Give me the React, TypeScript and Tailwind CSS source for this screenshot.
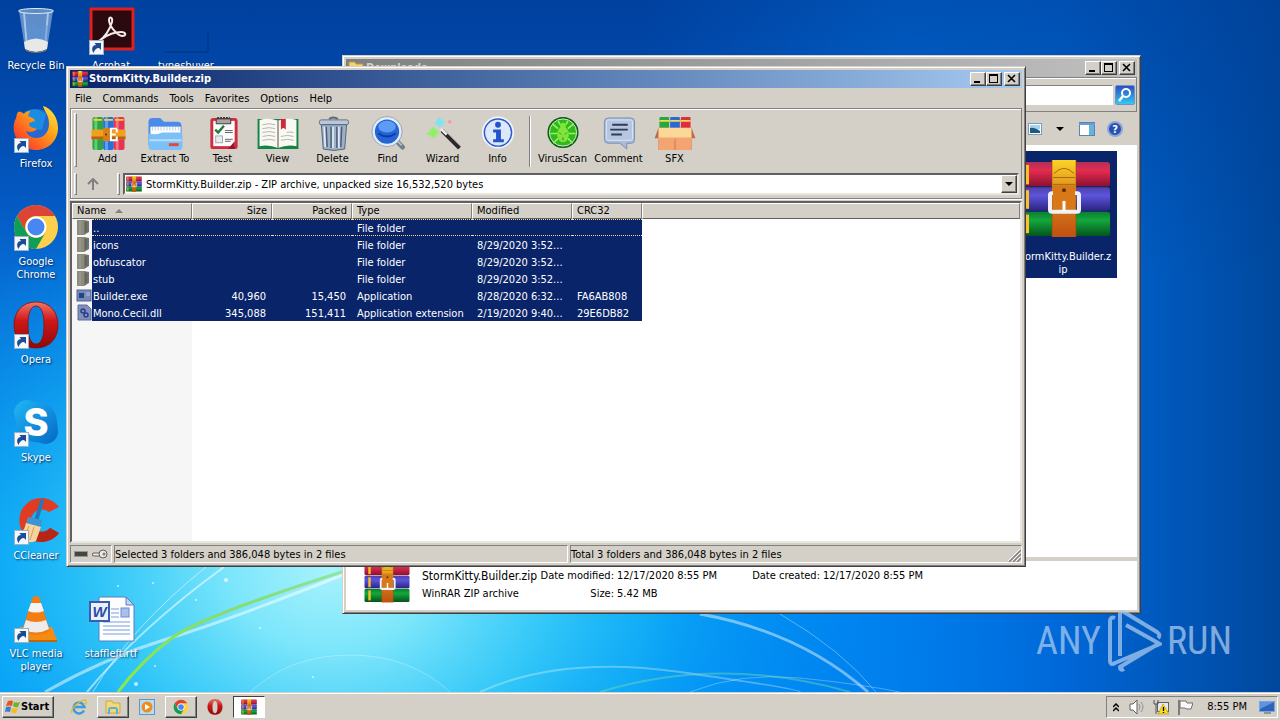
import type { ReactNode } from "react";

const raised =
  "border border-t-white border-l-white border-r-[#404040] border-b-[#404040] bg-[#d4d0c8] shadow-[inset_-1px_-1px_0_#808080]";
const sunken =
  "border border-t-[#808080] border-l-[#808080] border-r-white border-b-white";
const frame =
  "border border-t-[#d4d0c8] border-l-[#d4d0c8] border-r-[#404040] border-b-[#404040] bg-[#d4d0c8] shadow-[inset_1px_1px_0_#fff,inset_-1px_-1px_0_#808080]";

/* ---------- wallpaper ---------- */

function Wallpaper() {
  return (
    <svg
      className="absolute inset-0 h-full w-full"
      viewBox="0 0 1280 692"
      preserveAspectRatio="none"
      aria-hidden="true"
    >
      <defs>
        <linearGradient id="sky" x1="0" y1="0" x2="0" y2="1">
          <stop offset="0" stopColor="#0043a8" />
          <stop offset="0.3" stopColor="#0560cc" />
          <stop offset="0.6" stopColor="#0785e6" />
          <stop offset="0.8" stopColor="#009ff5" />
          <stop offset="1" stopColor="#0098f8" />
        </linearGradient>
        <radialGradient id="glow" gradientUnits="userSpaceOnUse" cx="0" cy="0" r="1" gradientTransform="translate(330 570) scale(500 400)">
          <stop offset="0" stopColor="#a8f2fc" />
          <stop offset="0.2" stopColor="#7ce6fb" />
          <stop offset="0.45" stopColor="#38ccf8" stopOpacity="0.9" />
          <stop offset="0.7" stopColor="#14b0f6" stopOpacity="0.55" />
          <stop offset="1" stopColor="#0a98f0" stopOpacity="0" />
        </radialGradient>
        <linearGradient id="shade" x1="0" y1="0" x2="1" y2="0">
          <stop offset="0.5" stopColor="#0078f0" stopOpacity="0" />
          <stop offset="0.7" stopColor="#0078ea" stopOpacity="0.8" />
          <stop offset="0.83" stopColor="#0068d8" />
          <stop offset="1" stopColor="#00479c" />
        </linearGradient>
        <linearGradient id="top" x1="0" y1="0" x2="0" y2="1">
          <stop offset="0" stopColor="#003f98" stopOpacity="0.6" />
          <stop offset="0.4" stopColor="#003f98" stopOpacity="0" />
        </linearGradient>
        <linearGradient id="green" x1="0" y1="0" x2="1" y2="0">
          <stop offset="0" stopColor="#8ae84a" />
          <stop offset="0.5" stopColor="#86dd6c" />
          <stop offset="1" stopColor="#86dd6c" stopOpacity="0.6" />
        </linearGradient>
      </defs>
      <rect width="1280" height="692" fill="url(#sky)" />
      <rect width="1280" height="692" fill="url(#glow)" />
      <rect width="1280" height="692" fill="url(#shade)" />
      <rect width="1280" height="692" fill="url(#top)" />
      <g fill="none" stroke="#fff">
        <path d="M45 692Q105 658 167 639T345 574" strokeWidth="3" opacity=".5" />
        <path d="M87 692Q140 628 224 567" strokeWidth="2" opacity=".55" />
        <path d="M93 692Q130 628 206 567" strokeWidth="1" opacity=".5" />
        <path d="M250 692Q290 655 350 655T450 692" strokeWidth="1" opacity=".3" fill="#fff" fillOpacity=".12" />
        <path d="M480 692Q560 655 680 672T800 692" strokeWidth="2" opacity=".3" />
        <path d="M690 692Q740 672 800 678T900 692" strokeWidth="1" opacity=".3" />
        <path d="M700 614Q800 632 868 692" strokeWidth="3" opacity=".45" />
        <path d="M780 614Q842 650 876 692" strokeWidth="1" opacity=".35" />
      </g>
      <path d="M118 692Q142 660 172 638T345 571" fill="none" stroke="url(#green)" strokeWidth="3" />
      <path d="M600 692Q720 655 850 692" fill="none" stroke="#7fe0a8" strokeWidth="2" opacity=".4" />
      <g fill="#fff" opacity=".7">
        <circle cx="118" cy="586" r="1" />
        <circle cx="153" cy="583" r="1" />
        <circle cx="226" cy="580" r="2" />
        <circle cx="196" cy="600" r="1" />
        <circle cx="136" cy="684" r="2" />
        <circle cx="155" cy="666" r="1" />
        <circle cx="260" cy="628" r="1" />
        <circle cx="313" cy="677" r="1" />
      </g>
    </svg>
  );
}

/* ---------- shared icons ---------- */

// three stacked books held by a belt
function Books({ className }: { className: string }) {
  return (
    <svg viewBox="0 0 96 80" preserveAspectRatio="none" className={className} aria-hidden="true">
      <defs>
        <linearGradient id="bkR" x1="0" y1="0" x2="0" y2="1">
          <stop offset="0" stopColor="#b03058" />
          <stop offset=".35" stopColor="#e42c50" />
          <stop offset="1" stopColor="#8c1030" />
        </linearGradient>
        <linearGradient id="bkB" x1="0" y1="0" x2="0" y2="1">
          <stop offset="0" stopColor="#5040a8" />
          <stop offset=".35" stopColor="#5c54dc" />
          <stop offset="1" stopColor="#2c2480" />
        </linearGradient>
        <linearGradient id="bkG" x1="0" y1="0" x2="0" y2="1">
          <stop offset="0" stopColor="#0c7c34" />
          <stop offset=".35" stopColor="#14a83c" />
          <stop offset="1" stopColor="#04541c" />
        </linearGradient>
        <linearGradient id="belt" x1="0" y1="0" x2="0" y2="1">
          <stop offset="0" stopColor="#fcd428" />
          <stop offset=".35" stopColor="#e09420" />
          <stop offset="1" stopColor="#c05010" />
        </linearGradient>
      </defs>
      <rect x="1" y="2" width="94" height="25" rx="3" fill="url(#bkR)" />
      <rect x="1" y="28" width="94" height="24" rx="3" fill="url(#bkB)" />
      <rect x="1" y="53" width="94" height="25" rx="3" fill="url(#bkG)" />
      <g fill="#fcc028">
        <rect x="9" y="5" width="5" height="20" />
        <rect x="9" y="31" width="5" height="19" />
        <rect x="9" y="56" width="5" height="19" />
      </g>
      <rect x="37" y="0" width="24" height="79" fill="url(#belt)" />
      <path d="M37 0v79M61 0v79" stroke="#8c5008" strokeWidth="1" opacity=".6" />
      <path d="M39 14q10-11 20 0M38 18h22M38 25h22" fill="none" stroke="#a86808" strokeWidth="1" />
      <rect x="35" y="34" width="29" height="19" rx="2" fill="none" stroke="#f0f0f8" strokeWidth="4" />
      <rect x="38" y="26" width="22" height="24" fill="#d87818" />
      <circle cx="49" cy="31" r="2" fill="#603008" />
      <path d="M49 42v11" stroke="#fff" strokeWidth="3" />
    </svg>
  );
}

function ShortcutBadge() {
  return (
    <svg viewBox="0 0 15 15" className="absolute bottom-0 left-[2px] h-[15px] w-[15px]" aria-hidden="true">
      <rect x=".5" y=".5" width="14" height="14" fill="#f4f8fc" stroke="#9cb0c4" />
      <path d="M4.500 13C1.500 8 4 5 7 5L5.500 3H12v7l-2-2C7 8 5.500 10 4.500 13z" fill="#1c4c94" />
    </svg>
  );
}

function ChromeLogo({ className }: { className: string }) {
  return (
    <svg viewBox="0 0 48 48" className={className} aria-hidden="true">
      <circle cx="24" cy="24" r="22" fill="#fcd04c" />
      <path d="M4.950 13A22 22 0 0 1 43.050 13H24A11 11 0 0 0 14.500 29.500z" fill="#dc4437" />
      <path d="M4.950 13A22 22 0 0 0 24 46L33.500 29.500A11 11 0 0 1 14.500 29.500z" fill="#109d58" />
      <circle cx="24" cy="24" r="10.500" fill="#fff" />
      <circle cx="24" cy="24" r="8.500" fill="#4886f4" />
    </svg>
  );
}

function OperaLogo({ className }: { className: string }) {
  return (
    <svg viewBox="0 0 48 48" className={className} aria-hidden="true">
      <defs>
        <linearGradient id="op" x1="0" y1="0" x2="0" y2="1">
          <stop offset="0" stopColor="#f07868" />
          <stop offset=".4" stopColor="#d01818" />
          <stop offset="1" stopColor="#900808" />
        </linearGradient>
      </defs>
      <path
        d="M24 1C10 1 2 11 2 24s8 23 22 23 22-10 22-23S38 1 24 1zm0 4c6 0 8 9 8 19s-2 19-8 19-8-9-8-19 2-19 8-19z"
        fill="url(#op)"
        fillRule="evenodd"
        stroke="#8c0c0c"
        strokeWidth=".8"
      />
    </svg>
  );
}

/* ---------- desktop icons ---------- */

const big = "h-12 w-12";

function RecycleBin() {
  return (
    <svg viewBox="0 0 48 48" className={big} aria-hidden="true">
      <path d="M7 4l6 38q11 5 22 0l6-38z" fill="#9cc0e4" fillOpacity=".6" />
      <path d="M12 6l3 34M36 6l-3 34" stroke="#dcecfc" strokeWidth="2" opacity=".6" />
      <path d="M14 20l7-6 8 8 8-5-3 18H16z" fill="#5c94d4" opacity=".5" />
      <path d="M12 35q12-7 24 0l-1 7q-11 6-22 0z" fill="#e8e8e8" />
      <path d="M13 42q11 6 22 0l-1 2q-10 4-20 0z" fill="#7c7468" />
      <ellipse cx="24" cy="4" rx="17.500" ry="2.500" fill="#5c8cc4" stroke="#e0ecf4" strokeWidth="1" />
    </svg>
  );
}

function Acrobat() {
  return (
    <svg viewBox="0 0 48 48" className={big} aria-hidden="true">
      <rect x="4" y="2" width="42" height="40" fill="#2a0a0e" stroke="#e0201c" strokeWidth="3" />
      <path
        d="M12 34c5-3 11-11 13-19 1-5-3-6-3-2 0 6 8 15 13 16 5 0 4-4-1-4-7 0-15 4-19 7-3 2-4 2-3 2z"
        fill="none"
        stroke="#f4ece8"
        strokeWidth="2"
      />
    </svg>
  );
}

function BlankFile() {
  return (
    <svg viewBox="0 0 48 48" className={big} aria-hidden="true">
      <path d="M2 45h44V24" fill="none" stroke="#003070" strokeWidth="1" opacity=".7" />
    </svg>
  );
}

function Firefox() {
  return (
    <svg viewBox="0 0 48 48" className={big} aria-hidden="true">
      <defs>
        <linearGradient id="ffx" x1="1" y1="0" x2="0" y2="1">
          <stop offset="0" stopColor="#fff040" />
          <stop offset=".4" stopColor="#ffa018" />
          <stop offset=".75" stopColor="#ff5024" />
          <stop offset="1" stopColor="#e0206c" />
        </linearGradient>
      </defs>
      <circle cx="25" cy="21" r="17" fill="#2468d0" />
      <path d="M12 8q10-8 22 1l-4 16-14-2z" fill="#1c8ce0" />
      <path
        d="M31 1c1 5 6 8 6 18 0 8-5 14-13 14-6 0-9-4-10-7 4 2 8 1 11-2-4-1-8-2-8-5 0-2 4-2 6-3 0-2-4-4-7-5l2-5c-4 0-6 3-6 3s-3-3-6-2C4 10 5 11 4 13c-2 4-3 8-2 14 2 10 11 18 22 18 13 0 22-10 22-22C46 12 39 3 31 1z"
        fill="url(#ffx)"
      />
    </svg>
  );
}

function Skype() {
  return (
    <svg viewBox="0 0 48 48" className={big} aria-hidden="true">
      <defs>
        <linearGradient id="sk" x1="0" y1="0" x2="1" y2="1">
          <stop offset="0" stopColor="#20b8f4" />
          <stop offset="1" stopColor="#0468c8" />
        </linearGradient>
      </defs>
      <path
        d="M15 1c4 0 6 2 9 2 12 0 21 9 21 20 0 3 1 5 1 9 0 8-6 13-13 13-3 0-6-2-9-2C12 43 4 34 4 23c0-3-2-5-2-9C2 7 8 1 15 1z"
        fill="url(#sk)"
      />
      <text x="24" y="37" textAnchor="middle" fontFamily="Inter, sans-serif" fontWeight="800" fontSize="38" fill="#fff">
        S
      </text>
    </svg>
  );
}

function CCleaner() {
  return (
    <svg viewBox="0 0 48 48" className={big} aria-hidden="true">
      <path d="M47 10A22 22 0 1 0 47 36L38 31A11 11 0 1 1 37 15z" fill="#e03c24" />
      <path d="M47 36A22 22 0 0 1 20 43L22 33Q32 38 38 31z" fill="#b82418" />
      <path d="M30 4l-6 20" stroke="#2478b8" strokeWidth="4" strokeLinecap="round" />
      <path d="M16 20l14 3-1 7-15-3z" fill="#3c94d0" />
      <path d="M14 26l15 4-5 14q-10 4-20-4 8-4 10-14z" fill="#f8d49c" />
      <path d="M17 29l-5 12M22 30l-4 13" stroke="#d0a060" strokeWidth="1" />
    </svg>
  );
}

function Vlc() {
  return (
    <svg viewBox="0 0 48 48" className={big} aria-hidden="true">
      <path d="M8 32h32l5 13H3z" fill="#f48c14" />
      <path d="M3 45h42v2H3z" fill="#c86408" />
      <path d="M21 2q3-2 6 0l11 34q-14 8-28 0z" fill="#f47c10" />
      <path d="M19 8h10l3 8q-8 3-16 0z" fill="#f4f4f4" />
      <path d="M14 25q10 4 20 0l3 9q-13 7-26 0z" fill="#ececec" />
    </svg>
  );
}

function WordDoc() {
  return (
    <svg viewBox="0 0 48 48" className={big} aria-hidden="true">
      <path d="M12 2h27l8 8v36H12z" fill="#fcfdff" stroke="#5c7cc0" strokeWidth="1" />
      <path d="M39 2v8h8z" fill="#c4d4f0" stroke="#5c7cc0" />
      <path d="M24 14h8M24 18h8M24 22h8M16 27h27M16 31h27M16 35h27M16 39h27" stroke="#7c9cdc" strokeWidth="1" />
      <rect x="34" y="13" width="8" height="9" fill="#a8c0ec" stroke="#6c8cd0" />
      <rect x="3" y="7" width="19" height="19" fill="#e8f0fc" stroke="#3c5cac" strokeWidth="2" />
      <text x="12.500" y="22" textAnchor="middle" fontFamily="Liberation Sans, sans-serif" fontStyle="italic" fontWeight="700" fontSize="15" fill="#2c4ca0">
        W
      </text>
    </svg>
  );
}

type DesktopItem = {
  label: string;
  icon: ReactNode;
  place: string;
  shortcut?: boolean;
};

const desktopItems: DesktopItem[] = [
  { label: "Recycle Bin", icon: <RecycleBin />, place: "col-start-1 row-start-1" },
  { label: "Acrobat", icon: <Acrobat />, place: "col-start-2 row-start-1", shortcut: true },
  { label: "typesbuyer", icon: <BlankFile />, place: "col-start-3 row-start-1" },
  { label: "Firefox", icon: <Firefox />, place: "col-start-1 row-start-2", shortcut: true },
  { label: "Google Chrome", icon: <ChromeLogo className={big} />, place: "col-start-1 row-start-3", shortcut: true },
  { label: "Opera", icon: <OperaLogo className={big} />, place: "col-start-1 row-start-4", shortcut: true },
  { label: "Skype", icon: <Skype />, place: "col-start-1 row-start-5", shortcut: true },
  { label: "CCleaner", icon: <CCleaner />, place: "col-start-1 row-start-6", shortcut: true },
  { label: "VLC media player", icon: <Vlc />, place: "col-start-1 row-start-7", shortcut: true },
  { label: "staffleft.rtf", icon: <WordDoc />, place: "col-start-2 row-start-7" },
];

function DesktopIcons() {
  return (
    <div className="relative grid w-max auto-rows-[98px] grid-cols-[72px_72px_72px] gap-x-[3px] pt-[7px]">
      {desktopItems.map((item) => (
        <button key={item.label} className={`flex flex-col items-center ${item.place}`}>
          <span className="relative">
            {item.icon}
            {item.shortcut && <ShortcutBadge />}
          </span>
          <span className="mt-1 max-w-[64px] leading-[13px] text-white [text-shadow:1px_1px_2px_#002050]">
            {item.label}
          </span>
        </button>
      ))}
    </div>
  );
}

/* ---------- window chrome ---------- */

function CaptionButtons() {
  const btn = `flex h-[14px] w-4 items-center justify-center ${raised}`;
  return (
    <div className="flex">
      <button aria-label="Minimize" className={btn}>
        <svg viewBox="0 0 12 10" className="h-[10px] w-3">
          <path d="M2 7h6v2H2z" />
        </svg>
      </button>
      <button aria-label="Maximize" className={btn}>
        <svg viewBox="0 0 12 10" className="h-[10px] w-3">
          <path d="M1 0h9v9H1zM2 2v6h7V2z" fillRule="evenodd" />
        </svg>
      </button>
      <button aria-label="Close" className={`ml-[2px] ${btn}`}>
        <svg viewBox="0 0 12 10" className="h-[10px] w-3">
          <path d="M2 1l7 7M9 1L2 8" stroke="#000" strokeWidth="1.600" />
        </svg>
      </button>
    </div>
  );
}

/* ---------- explorer window (behind) ---------- */

function ExplorerWindow() {
  return (
    <section
      aria-label="Downloads"
      className={`absolute top-[55px] left-[342px] flex h-[559px] w-[799px] flex-col p-[3px] ${frame}`}
    >
      <header className="flex h-[18px] shrink-0 items-center bg-gradient-to-r from-[#808080] to-[#c0c0c0] pr-[2px] pl-[2px]">
        <svg viewBox="0 0 16 16" className="h-4 w-4" aria-hidden="true">
          <path d="M1 2h6l1 2h7v11H1z" fill="#f0d478" stroke="#c09838" />
        </svg>
        <h2 className="ml-[2px] flex-1 font-bold text-[#d4d0c8]">Downloads</h2>
        <CaptionButtons />
      </header>
      <div className="flex h-[35px] shrink-0 items-center border border-[#808080] pr-px shadow-[inset_1px_1px_0_#fff]">
        <input
          aria-label="Search Downloads"
          className={`ml-auto h-5 w-[240px] bg-white px-1 ${sunken}`}
        />
        <button aria-label="Search" className="ml-[2px] flex h-5 w-5 items-center justify-center rounded-xs border border-[#6c94c8] bg-gradient-to-b from-[#2c4cc4] to-[#38c8f0]">
          <svg viewBox="0 0 16 16" className="h-4 w-4">
            <circle cx="9" cy="6" r="4" fill="none" stroke="#fff" strokeWidth="2" />
            <path d="M6 9l-4 5" stroke="#fff" strokeWidth="2.500" />
          </svg>
        </button>
      </div>
      <div className="flex h-[33px] shrink-0 items-center justify-end pr-[14px]">
        <button aria-label="Change view">
          <svg viewBox="0 0 14 12" className="h-3 w-[14px]">
            <rect x=".5" y=".5" width="13" height="11" fill="#fff" stroke="#7c9cb8" />
            <path d="M2 2h10v4H2z" fill="#a4d4f4" />
            <path d="M2 5q4-1 10 3v2H2z" fill="#1c5c80" />
          </svg>
        </button>
        <button aria-label="More views" className="ml-[14px]">
          <svg viewBox="0 0 8 4" className="h-1 w-2">
            <path d="M0 0h8L4 4z" />
          </svg>
        </button>
        <button aria-label="Preview pane" className="ml-[15px]">
          <svg viewBox="0 0 16 14" className="h-[14px] w-4">
            <rect x=".5" y=".5" width="15" height="13" fill="#fff" stroke="#5c84b0" />
            <path d="M0 1h16v2H0z" fill="#6c9cd0" />
            <path d="M10 3h5v10h-5z" fill="#68b4d8" />
          </svg>
        </button>
        <button aria-label="Help" className="ml-3">
          <svg viewBox="0 0 16 16" className="h-4 w-4">
            <circle cx="8" cy="8" r="7" fill="#2850b0" stroke="#8ca4d8" strokeWidth="2" />
            <text x="8" y="12" textAnchor="middle" fontSize="11" fontWeight="700" fill="#fff">
              ?
            </text>
          </svg>
        </button>
      </div>
      <div className="flex min-h-0 flex-1 items-start justify-end bg-white pt-[6px] pr-5">
        <button className="flex h-[127px] w-[108px] flex-col items-center bg-[#0a246a] pt-[9px] text-white">
          <Books className="h-[78px] w-24" />
          <span className="mt-3 w-full leading-[13px]">
            StormKitty.Builder.z
            <br />
            ip
          </span>
        </button>
      </div>
      <footer className="flex h-[53px] shrink-0 items-start border-t-4 border-[#d4d0c8] bg-white pl-[18px]">
        <Books className="h-[42px] w-[46px]" />
        <dl className="mt-[6px] ml-3 grid grid-cols-[116px_76px_138px_68px_110px] leading-[18px] whitespace-nowrap">
          <dt className="text-[12px]">StormKitty.Builder.zip</dt>
          <dt className="text-right">Date modified:</dt>
          <dd className="pl-[3px]">12/17/2020 8:55 PM</dd>
          <dt className="text-right">Date created:</dt>
          <dd className="pl-[3px]">12/17/2020 8:55 PM</dd>
          <dd>WinRAR ZIP archive</dd>
          <dt className="text-right">Size:</dt>
          <dd className="pl-[3px]">5.42 MB</dd>
        </dl>
      </footer>
    </section>
  );
}

/* ---------- archive manager toolbar ---------- */

const tool = "h-9 w-11";

function AddIcon() {
  return (
    <svg viewBox="0 0 44 36" className={tool} aria-hidden="true">
      <rect x="6" y="1" width="11" height="34" rx="2" fill="#2ca444" />
      <rect x="17" y="1" width="11" height="34" rx="2" fill="#2870d8" />
      <rect x="28" y="1" width="11" height="34" rx="2" fill="#e43450" />
      <path d="M8 1h3v34H8z" fill="#7ce08c" opacity=".7" />
      <path d="M19 1h3v34h-3z" fill="#7cb4fc" opacity=".7" />
      <path d="M30 1h3v34h-3z" fill="#fc8c9c" opacity=".7" />
      <path d="M7 3h9v2H7zM18 3h9v2h-9zM29 3h9v2h-9z" fill="#f4d038" />
      <rect x="5" y="14" width="35" height="10" rx="1" fill="#f0a020" />
      <path d="M5 21h35v3H5z" fill="#b86410" />
      <rect x="17" y="12" width="7" height="14" rx="1" fill="#d88018" />
      <path d="M31 13h-6v12h6v-4M25 19h5M31 13v4" fill="none" stroke="#fff" strokeWidth="2" />
      <circle cx="20" cy="19" r="1" fill="#603000" />
    </svg>
  );
}

function ExtractIcon() {
  return (
    <svg viewBox="0 0 44 36" className={tool} aria-hidden="true">
      <path d="M5 6q0-4 4-4h8l4 4h14q4 0 4 4v20H5z" fill="#4c8ce8" />
      <path d="M7 11h31v12H7z" fill="#fff" />
      <path d="M9 11v4M12 11v4M15 11v4M18 11v4M21 11v4M24 11v4M27 11v4M30 11v4M33 11v4M36 11v4" stroke="#b8cce4" />
      <path d="M5 18q9 2 14-1h17q4 0 4 4v10q0 4-4 4H9q-4 0-4-4z" fill="#7cc0f8" />
      <path d="M6 25h33" stroke="#b4e0fc" strokeWidth="2" />
      <rect x="26" y="28" width="10" height="3" fill="#e04838" />
    </svg>
  );
}

function TestIcon() {
  return (
    <svg viewBox="0 0 44 36" className={tool} aria-hidden="true">
      <rect x="9" y="2" width="28" height="32" rx="3" fill="#d02c40" />
      <path d="M12 5h22v26H12z" fill="#fcfcfc" />
      <path d="M15 3h15v5H15z" fill="#a8a4a0" stroke="#403838" />
      <path d="M16 2h13" stroke="#403838" strokeWidth="2" strokeDasharray="2 1" />
      <path d="M14 14l3 3 6-7" fill="none" stroke="#1c7c3c" strokeWidth="2.500" />
      <path d="M24 15h8M24 17h8M24 24h8M24 26h6" stroke="#606468" />
      <rect x="14.500" y="20.500" width="7" height="7" fill="#e8ecec" stroke="#a0a8a8" />
      <path d="M34 26v8l-7 0z" fill="#9c1428" />
    </svg>
  );
}

function ViewIcon() {
  return (
    <svg viewBox="0 0 44 36" className={tool} aria-hidden="true">
      <path d="M1 3h42v31H1z" fill="#148444" />
      <path d="M3 4q10-3 19 1 9-4 19-1v27q-10-2-19 2-9-4-19-2z" fill="#f8f8f4" />
      <path d="M22 5v28" stroke="#a8a090" strokeWidth="2" />
      <path d="M6 9q7-2 13 0M6 13q7-2 13 0M6 17q7-2 13 0M6 21q7-2 13 0M6 25q7-2 13 0M31 17q4-1 7 0M25 21q7-2 13 0M25 25q7-2 13 0" fill="none" stroke="#b8b4a8" />
      <path d="M25 3h5v11l-2.500-2L25 14z" fill="#d02838" />
    </svg>
  );
}

function DeleteIcon() {
  return (
    <svg viewBox="0 0 44 36" className={tool} aria-hidden="true">
      <path d="M18 3q4-3 9 0" fill="none" stroke="#5c6474" strokeWidth="2" />
      <rect x="8" y="4" width="30" height="5" rx="2" fill="#b8c8d8" stroke="#607084" />
      <path d="M10 9h26l-2 25q-11 3-22 0z" fill="#9cb0c8" stroke="#54647c" />
      <path d="M15 11l1 21M20 11v22M26 11v22M31 11l-1 21" stroke="#4c5c78" strokeWidth="1.500" />
      <path d="M13 11l1 21M22 11v22M28 11v22" stroke="#e8f0f8" strokeWidth="1.500" />
    </svg>
  );
}

function FindIcon() {
  return (
    <svg viewBox="0 0 44 36" className={tool} aria-hidden="true">
      <path d="M29 24l8 8" stroke="#70808c" strokeWidth="5" strokeLinecap="round" />
      <path d="M30 24l6 6" stroke="#c0ccd4" strokeWidth="1.500" />
      <circle cx="21" cy="16" r="14" fill="#2464d4" stroke="#e4ecf8" strokeWidth="3" />
      <circle cx="21" cy="16" r="15.500" fill="none" stroke="#7888a8" strokeWidth=".7" />
      <ellipse cx="21" cy="11" rx="9" ry="6" fill="#5c9cf4" />
      <path d="M12 18q9 6 18 0" fill="none" stroke="#0c3ca8" strokeWidth="2" />
    </svg>
  );
}

function WizardIcon() {
  return (
    <svg viewBox="0 0 44 36" className={tool} aria-hidden="true">
      <path d="M21 15l18 18" stroke="#2c2828" strokeWidth="4" />
      <path d="M20 13l6 6" stroke="#f0ecec" strokeWidth="3" />
      <path d="M22 13l17 17" stroke="#a09898" strokeWidth="1" />
      <circle cx="12" cy="17" r="6" fill="#8cf07c" opacity=".35" />
      <path d="M12 11l2 4 4 1-4 3-1 4-3-3-5-1 4-3z" fill="#90f060" />
      <circle cx="19" cy="7" r="5" fill="#78e4f8" opacity=".3" />
      <path d="M18 1l2 4 4 1-4 3-1 3-2-3-4-1 3-3z" fill="#78e4f8" />
      <circle cx="29" cy="6" r="2" fill="#f88c98" opacity=".7" />
    </svg>
  );
}

function InfoIcon() {
  return (
    <svg viewBox="0 0 44 36" className={tool} aria-hidden="true">
      <circle cx="22" cy="17" r="16.500" fill="#f0f6fe" />
      <circle cx="22" cy="17" r="14" fill="#dce8fc" stroke="#2c58cc" strokeWidth="1.500" />
      <circle cx="22" cy="9" r="3" fill="#2454cc" />
      <path d="M17 14h8v10h3v3H17v-3h3v-7h-3z" fill="#2454cc" />
    </svg>
  );
}

function VirusIcon() {
  return (
    <svg viewBox="0 0 44 36" className={tool} aria-hidden="true">
      <circle cx="22" cy="17" r="16" fill="#0c5c14" />
      <circle cx="22" cy="17" r="14" fill="#30b820" stroke="#d8f0d4" strokeWidth="1" />
      <path d="M17 13l-6-5M27 13l6-5M16 18H9M28 18h7M17 23l-5 5M27 23l5 5M19 9l-2-4M25 9l2-4" stroke="#9cf458" strokeWidth="1.600" />
      <ellipse cx="22" cy="19" rx="6" ry="8" fill="#80e43c" />
      <circle cx="22" cy="10" r="3" fill="#80e43c" />
      <path d="M18 17l2 2M26 17l-2 2M22 22v3" stroke="#248c18" />
    </svg>
  );
}

function CommentIcon() {
  return (
    <svg viewBox="0 0 44 36" className={tool} aria-hidden="true">
      <path d="M11 2h23q4 0 4 4v18q0 4-3 4l-5 0 0 6-7-6H11q-4 0-4-4V6q0-4 4-4z" fill="#a8bcd8" stroke="#7890b4" />
      <rect x="9" y="4" width="27" height="21" rx="2" fill="#b4c6e0" stroke="#dce6f4" />
      <path d="M15 9h16M13 14h18M14 19h11" stroke="#303c54" strokeWidth="2" />
    </svg>
  );
}

function SfxIcon() {
  return (
    <svg viewBox="0 0 44 36" className={tool} aria-hidden="true">
      <rect x="6" y="1" width="10" height="14" rx="1" fill="#28a83c" />
      <rect x="17" y="1" width="10" height="14" rx="1" fill="#2868d8" />
      <rect x="28" y="1" width="10" height="14" rx="1" fill="#e02c3c" />
      <path d="M6 4h10v2H6zM17 4h10v2H17zM28 4h10v2H28z" fill="#f4d850" />
      <path d="M5 12h34l4 11h-4v12H5V23H1z" fill="#b86c48" />
      <path d="M5 12h34v12H5z" fill="#fcd898" />
      <path d="M5 22h34v13H5z" fill="#f4a470" />
      <path d="M22 24v11" stroke="#c87848" />
    </svg>
  );
}

const tools: { label: string; icon: ReactNode; width: string }[] = [
  { label: "Add", icon: <AddIcon />, width: "w-[55px]" },
  { label: "Extract To", icon: <ExtractIcon />, width: "w-[60px]" },
  { label: "Test", icon: <TestIcon />, width: "w-[55px]" },
  { label: "View", icon: <ViewIcon />, width: "w-[55px]" },
  { label: "Delete", icon: <DeleteIcon />, width: "w-[55px]" },
  { label: "Find", icon: <FindIcon />, width: "w-[55px]" },
  { label: "Wizard", icon: <WizardIcon />, width: "w-[55px]" },
  { label: "Info", icon: <InfoIcon />, width: "w-[55px]" },
];

const extraTools: { label: string; icon: ReactNode; width: string }[] = [
  { label: "VirusScan", icon: <VirusIcon />, width: "w-[55px]" },
  { label: "Comment", icon: <CommentIcon />, width: "w-[57px]" },
  { label: "SFX", icon: <SfxIcon />, width: "w-[55px]" },
];

function ToolButton({ label, icon, width }: { label: string; icon: ReactNode; width: string }) {
  return (
    <button className={`flex flex-col items-center whitespace-nowrap ${width}`}>
      {icon}
      <span className="leading-[16px]">{label}</span>
    </button>
  );
}

function Grip() {
  return <span className="w-[3px] border border-t-white border-l-white border-r-[#808080] border-b-[#808080]" />;
}

/* ---------- file list ---------- */

function FolderIcon() {
  return (
    <svg viewBox="0 0 16 17" className="h-[17px] w-4" aria-hidden="true">
      <path d="M1 1h7v15H1z" fill="#8c8c7c" />
      <path d="M8 1l5 1v11l-5 3z" fill="#74746c" />
      <path d="M4 2v13" stroke="#a4a490" />
      <path d="M10 3v10" stroke="#54585c" />
    </svg>
  );
}

function ExeIcon() {
  return (
    <svg viewBox="0 0 16 17" className="h-[17px] w-4" aria-hidden="true">
      <rect x="1" y="3" width="14" height="11" fill="#7888b4" stroke="#50649c" />
      <rect x="3" y="6" width="5" height="5" fill="#204484" />
      <path d="M10 6h4M10 8h4" stroke="#b4c0dc" />
    </svg>
  );
}

function DllIcon() {
  return (
    <svg viewBox="0 0 16 17" className="h-[17px] w-4" aria-hidden="true">
      <path d="M2 1h9l4 4v11H2z" fill="#8490b8" stroke="#5c6ca0" />
      <circle cx="7" cy="7" r="2" fill="none" stroke="#24408c" strokeWidth="1.500" />
      <circle cx="10" cy="11" r="2" fill="none" stroke="#24408c" strokeWidth="1.500" />
    </svg>
  );
}

const files = [
  { name: "..", icon: <FolderIcon />, size: "", packed: "", type: "File folder", modified: "", crc: "" },
  { name: "icons", icon: <FolderIcon />, size: "", packed: "", type: "File folder", modified: "8/29/2020 3:52...", crc: "" },
  { name: "obfuscator", icon: <FolderIcon />, size: "", packed: "", type: "File folder", modified: "8/29/2020 3:52...", crc: "" },
  { name: "stub", icon: <FolderIcon />, size: "", packed: "", type: "File folder", modified: "8/29/2020 3:52...", crc: "" },
  { name: "Builder.exe", icon: <ExeIcon />, size: "40,960", packed: "15,450", type: "Application", modified: "8/28/2020 6:32...", crc: "FA6AB808" },
  { name: "Mono.Cecil.dll", icon: <DllIcon />, size: "345,088", packed: "151,411", type: "Application extension", modified: "2/19/2020 9:40...", crc: "29E6DB82" },
];

function FileList() {
  const th =
    "h-4 border border-t-white border-l-white border-r-[#808080] border-b-[#606060] bg-[#d4d0c8] px-1 font-normal";
  return (
    <div className="mt-[2px] min-h-0 flex-1 border-2 border-t-[#606060] border-l-[#606060] border-r-[#e8e6e0] border-b-[#e8e6e0] bg-[linear-gradient(to_right,#f6f6f6_120px,#fff_120px)]">
      <table className="w-full table-fixed border-separate border-spacing-0 text-left">
        <colgroup>
          <col className="w-[120px]" />
          <col className="w-20" />
          <col className="w-20" />
          <col className="w-[120px]" />
          <col className="w-[100px]" />
          <col className="w-[70px]" />
          <col />
        </colgroup>
        <thead>
          <tr className="leading-[14px]">
            <th className={th}>
              <span className="flex items-center gap-[9px]">
                Name
                <svg viewBox="0 0 8 4" className="h-1 w-2" aria-hidden="true">
                  <path d="M0 4h8L4 0z" fill="#808080" />
                </svg>
              </span>
            </th>
            <th className={`text-right ${th}`}>Size</th>
            <th className={`text-right ${th}`}>Packed</th>
            <th className={th}>Type</th>
            <th className={th}>Modified</th>
            <th className={th}>CRC32</th>
            <td className={th} />
          </tr>
        </thead>
        <tbody className="text-white">
          {files.map((f, i) => {
            const cell = `h-[17px] whitespace-nowrap bg-[#0a246a] leading-[17px] border-y ${
              i === 0 ? "border-dotted border-[#f5db95]" : "border-transparent"
            }`;
            return (
              <tr key={f.name}>
                <td className="p-0">
                  <div className="flex">
                    <span className="w-5 shrink-0 pl-1">{f.icon}</span>
                    <span className={`flex-1 pl-px ${cell}`}>{f.name}</span>
                  </div>
                </td>
                <td className="p-0 text-right">
                  <div className={`pr-[6px] ${cell}`}>{f.size}</div>
                </td>
                <td className="p-0 text-right">
                  <div className={`pr-[6px] ${cell}`}>{f.packed}</div>
                </td>
                <td className="p-0">
                  <div className={`pl-[5px] ${cell}`}>{f.type}</div>
                </td>
                <td className="p-0">
                  <div className={`pl-[5px] ${cell}`}>{f.modified}</div>
                </td>
                <td className="p-0">
                  <div className={`pl-[5px] ${cell}`}>{f.crc}</div>
                </td>
                <td />
              </tr>
            );
          })}
        </tbody>
      </table>
    </div>
  );
}

/* ---------- archive window ---------- */

function ArchiveWindow() {
  return (
    <section
      aria-label="StormKitty.Builder.zip"
      className={`absolute top-[66px] left-[66px] flex h-[501px] w-[960px] flex-col p-[3px] ${frame}`}
    >
      <header className="flex h-[18px] shrink-0 items-center bg-gradient-to-r from-[#0a246a] to-[#a6caf0] px-[2px]">
        <Books className="h-4 w-4" />
        <h1 className="ml-[1px] flex-1 leading-4 font-bold text-white">StormKitty.Builder.zip</h1>
        <CaptionButtons />
      </header>
      <nav className="flex h-5 shrink-0 items-center gap-px pt-[2px]">
        {["File", "Commands", "Tools", "Favorites", "Options", "Help"].map((m) => (
          <button key={m} className="px-[5px]">
            {m}
          </button>
        ))}
      </nav>
      <div className="flex shrink-0 flex-col border border-[#808080] shadow-[inset_1px_1px_0_#fff,0_1px_0_#fff]">
        <div className="flex h-[62px] py-1 pl-[3px]">
          <Grip />
          <div className="ml-[3px] flex pt-[3px]">
            {tools.map((t) => (
              <ToolButton key={t.label} {...t} />
            ))}
            <span className="mx-1 w-[2px] border-l border-l-[#808080] bg-white" />
            {extraTools.map((t) => (
              <ToolButton key={t.label} {...t} />
            ))}
          </div>
        </div>
        <div className="flex h-[27px] pt-[2px] pb-[3px] pr-[2px] pl-[3px]">
          <Grip />
          <button aria-label="Up one level" className="ml-2 flex w-4 items-center justify-center">
            <svg viewBox="0 0 12 12" className="h-3 w-3">
              <path d="M6 12V2M1 6l5-5 5 5" fill="none" stroke="#808080" strokeWidth="2" />
            </svg>
          </button>
          <span className="ml-4 flex">
            <Grip />
          </span>
          <div className="ml-[3px] flex flex-1 items-center border-2 border-t-[#606060] border-l-[#606060] border-r-[#e8e6e0] border-b-[#e8e6e0] bg-white pl-[1px]">
            <Books className="h-4 w-4" />
            <select aria-label="Archive path" className="h-full min-w-0 flex-1 appearance-none pt-px pl-1">
              <option>StormKitty.Builder.zip - ZIP archive, unpacked size 16,532,520 bytes</option>
            </select>
            <span className={`flex h-full w-4 items-center justify-center ${raised}`}>
              <svg viewBox="0 0 8 4" className="h-1 w-2" aria-hidden="true">
                <path d="M0 0h8L4 4z" />
              </svg>
            </span>
          </div>
        </div>
      </div>
      <FileList />
      <footer className="mt-[2px] flex h-[18px] shrink-0 gap-[2px] leading-[18px]">
        <div className={`flex w-[42px] items-center justify-center gap-1 ${sunken}`}>
          <svg viewBox="0 0 14 6" className="h-[6px] w-[14px]" aria-hidden="true">
            <rect x=".5" y=".5" width="13" height="5" fill="#404840" stroke="#909890" />
          </svg>
          <svg viewBox="0 0 16 10" className="h-[10px] w-4" aria-hidden="true">
            <path d="M8 4H1l-1 2 2 1h6z" fill="#e8e8e8" stroke="#606060" />
            <circle cx="11" cy="5" r="4" fill="#e8e8e8" stroke="#606060" />
            <circle cx="12" cy="5" r="1.500" fill="#808080" />
          </svg>
        </div>
        <p className={`w-[454px] ${sunken}`}>Selected 3 folders and 386,048 bytes in 2 files</p>
        <div className={`flex flex-1 ${sunken}`}>
          <p className="flex-1">Total 3 folders and 386,048 bytes in 2 files</p>
          <svg viewBox="0 0 13 13" className="mt-[3px] h-[13px] w-[13px]" aria-hidden="true">
            <path d="M1 13L13 1M5 13l8-8M9 13l4-4" stroke="#808080" strokeWidth="1.500" />
            <path d="M0 12L12 0M4 12l8-8M8 12l4-4" stroke="#fff" />
          </svg>
        </div>
      </footer>
    </section>
  );
}

/* ---------- watermark ---------- */

function Watermark() {
  return (
    <div className="pointer-events-none absolute right-[48px] bottom-[20px] flex h-[62px] items-center font-['Roboto_Condensed','Liberation_Sans_Narrow',Roboto,sans-serif] text-[38px] leading-[40px] text-[#a9c8ee] opacity-75">
      <span>ANY</span>
      <svg viewBox="0 0 56 62" className="mx-[5px] h-[62px] w-14" aria-hidden="true">
        <path
          d="M9 8Q4 6 4 12v38q0 6 5 3L54 34 20 15M14 46V4q0-4 4-2l33 20q4 3 1 6M18 59q-4 2-4-2l38-23"
          fill="none"
          stroke="#a9c8ee"
          strokeWidth="4"
          strokeLinejoin="round"
        />
      </svg>
      <span>RUN</span>
    </div>
  );
}

/* ---------- taskbar ---------- */

function Taskbar() {
  const task = `flex h-[22px] w-8 items-center justify-center ${raised}`;
  const quick = "flex h-[22px] w-9 items-center justify-center";
  return (
    <footer className="flex h-7 shrink-0 items-center border-t border-[#d4d0c8] bg-[#d4d0c8] px-[2px] pt-px shadow-[inset_0_1px_0_#fff]">
      <button className={`flex h-[22px] w-[52px] items-center pl-[2px] font-bold ${raised}`}>
        <svg viewBox="0 0 16 16" className="h-4 w-4" aria-hidden="true">
          <path d="M3 2q3-1 5 0L7 7Q4 6 1 7z" fill="#e8541c" />
          <path d="M9 3q3 1 6 0l-2 5q-3 1-5-1z" fill="#6cb42c" />
          <path d="M1 8q3-1 5 0l-1 5q-3-1-5 0z" fill="#3c7cd0" />
          <path d="M7 9q3 1 6 0l-2 5q-3 1-5-1z" fill="#f4bc1c" />
        </svg>
        Start
      </button>
      <div className="ml-[7px] flex items-center">
        <button aria-label="Internet Explorer" className={quick}>
          <svg viewBox="0 0 16 16" className="h-4 w-4">
            <path d="M13 11.500A5.500 5.500 0 1 1 13.500 8H4" fill="none" stroke="#3c9cdc" strokeWidth="2.500" />
            <path d="M1 14Q-1 11 6 5T15 2q1 2-2 4" fill="none" stroke="#e8b828" strokeWidth="1.300" />
          </svg>
        </button>
        <button aria-label="Windows Explorer" className={task}>
          <svg viewBox="0 0 16 16" className="h-4 w-4">
            <path d="M1 2h6l1 2h7v10H1z" fill="#f4d878" stroke="#d0a840" />
            <path d="M4 15v-4q0-2 2-2h4q2 0 2 2v4" fill="none" stroke="#58b0dc" strokeWidth="2" />
          </svg>
        </button>
        <button aria-label="Media Player" className={quick}>
          <svg viewBox="0 0 16 16" className="h-4 w-4">
            <rect x=".5" y=".5" width="15" height="15" fill="#b8dcf4" stroke="#5c98c8" />
            <circle cx="8" cy="8" r="5.500" fill="#f08c1c" />
            <path d="M6 5l5 3-5 3z" fill="#fff" />
          </svg>
        </button>
        <button aria-label="Chrome" className={task}>
          <ChromeLogo className="h-4 w-4" />
        </button>
        <button aria-label="Opera" className={quick}>
          <OperaLogo className="h-4 w-4" />
        </button>
        <button
          aria-label="WinRAR"
          className="flex h-[22px] w-8 items-center justify-center border border-t-[#404040] border-l-[#404040] border-r-white border-b-white bg-white"
        >
          <Books className="h-4 w-4" />
        </button>
      </div>
      <div className={`ml-auto flex h-[22px] w-[172px] items-center pr-[2px] pl-[6px] ${sunken}`}>
        <button aria-label="Show hidden icons">
          <svg viewBox="0 0 6 9" className="h-[9px] w-[6px]">
            <path d="M0 4l3-3 3 3M0 8l3-3 3 3" fill="none" stroke="#000" strokeWidth="1.500" />
          </svg>
        </button>
        <button aria-label="Volume" className="ml-[10px]">
          <svg viewBox="0 0 16 16" className="h-4 w-4">
            <path d="M1 5h3l4-4v14l-4-4H1z" fill="#fff" stroke="#606060" />
            <path d="M10 5q2 3 0 6M12 3q4 5 0 10" fill="none" stroke="#909090" />
          </svg>
        </button>
        <button aria-label="Network" className="ml-2">
          <svg viewBox="0 0 16 16" className="h-4 w-4">
            <rect x="4.500" y="3.500" width="11" height="9" fill="#e8e8e8" stroke="#606060" />
            <path d="M1 1v4h4V1M3 5v10" fill="none" stroke="#505050" />
            <path d="M10 5l6 10H5z" fill="#f8dc20" stroke="#b09000" strokeWidth=".6" />
            <path d="M10.500 8v4M10.500 13v1" stroke="#000" strokeWidth="1.300" />
          </svg>
        </button>
        <button aria-label="Action Center" className="ml-2">
          <svg viewBox="0 0 16 16" className="h-4 w-4">
            <path d="M2 1v15" stroke="#606060" strokeWidth="1.500" />
            <path d="M3 2h6l1 2h6l-2 6H9L8 9H3z" fill="#f8f8f8" stroke="#707070" />
          </svg>
        </button>
        <time className="ml-auto">8:55 PM</time>
        <button aria-label="Show desktop" className="ml-3">
          <svg viewBox="0 0 16 14" className="h-[14px] w-4">
            <rect x=".5" y="1.500" width="15" height="10" fill="#2c64bc" stroke="#7ca4dc" />
            <path d="M1 2h14L1 9z" fill="#5c94e4" />
            <path d="M5 13h7" stroke="#505860" />
          </svg>
        </button>
      </div>
    </footer>
  );
}

export default function App() {
  return (
    <div className="flex h-screen flex-col overflow-hidden font-['Tahoma','DejaVu_Sans_Condensed','DejaVu_Sans',sans-serif] text-[11px] leading-[14px] text-black">
      <main className="relative min-h-0 flex-1 overflow-hidden">
        <Wallpaper />
        <DesktopIcons />
        <ExplorerWindow />
        <ArchiveWindow />
        <Watermark />
      </main>
      <Taskbar />
    </div>
  );
}
